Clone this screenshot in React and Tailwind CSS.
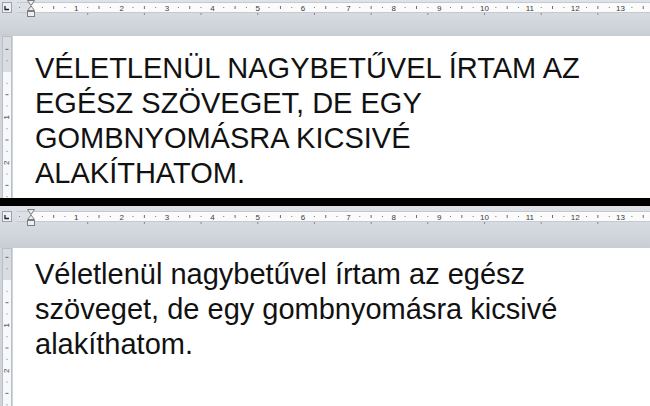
const U = 45.35;

function HRuler({ top, height }) {
  const ox = 31;
  const items = [];
  for (let q = -1; q < 64; q++) {
    const x = ox + (q * U) / 4;
    if (x > 652) break;
    if (q === 0) continue;
    const r = ((q % 4) + 4) % 4;
    if (r === 0)
      items.push(
        <text key={q} x={x} y={top + 8} fontSize="8" textAnchor="middle" fill="#3a3a3a" fontFamily="Liberation Sans, Arial, sans-serif">
          {q / 4}
        </text>
      );
    else if (r === 2) items.push(<rect key={q} x={x - 0.5} y={top + 3} width="1" height="3" fill="#6b6b6b" />);
    else items.push(<rect key={q} x={x - 0.5} y={top + 4} width="1" height="1" fill="#7a7a7a" />);
  }
  const tabs = [];
  for (let k = 1; k < 12; k++) {
    const x = ox + k * U * 1.25;
    if (x > 650) break;
    tabs.push(<rect key={"t" + k} x={x - 0.5} y={top + 10} width="1" height="2" fill="#8a8a8a" />);
  }
  return (
    <svg width="650" height={height} className="block">
      <defs>
        <linearGradient id={"g" + top} x1="0" y1="0" x2="0" y2="1">
          <stop offset="0" stopColor="#dfe2e7" />
          <stop offset="0.45" stopColor="#d6dae0" />
          <stop offset="1" stopColor="#c9ced5" />
        </linearGradient>
      </defs>
      <rect x="0" y="0" width="650" height={height} fill={`url(#g${top})`} />
      <rect x="2.5" y={top - 0.5} width="9" height="10" fill="#eef0f3" stroke="#9aa2ad" />
      <path d={`M5 ${top + 3} V${top + 6.5} H9`} stroke="#222" strokeWidth="1.3" fill="none" />
      <rect x="17" y={top} width="640" height="9" fill="#fbfbfc" />
      <rect x="17" y={top} width="14" height="9" fill="#dde1e6" />
      <line x1="17" y1={top - 0.5} x2="650" y2={top - 0.5} stroke="#c4cad2" />
      <line x1="17" y1={top + 9.5} x2="650" y2={top + 9.5} stroke="#c4cad2" />
      {items}
      {tabs}
      <path d={`M27.5 ${top - 2.5} H34.5 L31 ${top + 2.5} Z`} fill="#eceef1" stroke="#7d7d7d" />
      <path d={`M31 ${top + 3} L34.5 ${top + 7.5} H27.5 Z`} fill="#eceef1" stroke="#7d7d7d" />
      <rect x="27.5" y={top + 8.5} width="7" height="5" fill="#eceef1" stroke="#7d7d7d" />
    </svg>
  );
}

function VRuler({ origin, height }) {
  const items = [];
  for (let q = -3; q < 40; q++) {
    const y = origin + (q * U) / 4;
    if (y > height) break;
    if (y < 4) continue;
    if (q === 0) continue;
    const r = ((q % 4) + 4) % 4;
    if (r === 0)
      items.push(
        <text key={q} x="7" y={y} fontSize="8" textAnchor="middle" dominantBaseline="central" fill="#3a3a3a" fontFamily="Liberation Sans, Arial, sans-serif" transform={`rotate(-90 7 ${y})`}>
          {q / 4}
        </text>
      );
    else if (r === 2) items.push(<rect key={q} x="5.5" y={y - 0.5} width="3" height="1" fill="#6b6b6b" />);
    else items.push(<rect key={q} x="6.5" y={y - 0.5} width="1" height="1" fill="#7a7a7a" />);
  }
  return (
    <svg width="13" height={height} className="block">
      <rect x="0" y="0" width="13" height={height} fill="#d0d5dc" />
      <rect x="2.5" y="0.5" width="9" height={height} fill="#f7f8f9" stroke="#b8bfc8" />
      <rect x="3" y="1" width="8" height={origin - 1} fill="#d9dde2" />
      {items}
    </svg>
  );
}

function Panel({ h, headH, rulerTop, vOrigin, padTop, lines }) {
  const bodyH = h - headH;
  return (
    <div className="flex flex-col overflow-hidden" style={{ height: h }}>
      <HRuler top={rulerTop} height={headH} />
      <div className="flex flex-1">
        <VRuler origin={vOrigin} height={bodyH} />
        <div
          className="flex-1 bg-white pl-[22px] text-[29px] leading-[35px] text-[#111] font-['Liberation_Sans',Arial,sans-serif]"
          style={{ paddingTop: padTop }}
        >
          {lines.map((l, i) => (
            <div key={i} className="whitespace-nowrap">
              {l}
            </div>
          ))}
        </div>
      </div>
    </div>
  );
}

export default function App() {
  return (
    <div className="w-[650px] h-[406px] overflow-hidden bg-white">
      <Panel
        h={198}
        headH={36}
        rulerTop={3}
        vOrigin={36}
        padTop={15}
        lines={["VÉLETLENÜL NAGYBETŰVEL ÍRTAM AZ", "EGÉSZ SZÖVEGET, DE EGY", "GOMBNYOMÁSRA KICSIVÉ", "ALAKÍTHATOM."]}
      />
      <div className="h-[8px] bg-black" />
      <Panel
        h={200}
        headH={42}
        rulerTop={6}
        vOrigin={32}
        padTop={9}
        lines={["Véletlenül nagybetűvel írtam az egész", "szöveget, de egy gombnyomásra kicsivé", "alakíthatom."]}
      />
    </div>
  );
}
